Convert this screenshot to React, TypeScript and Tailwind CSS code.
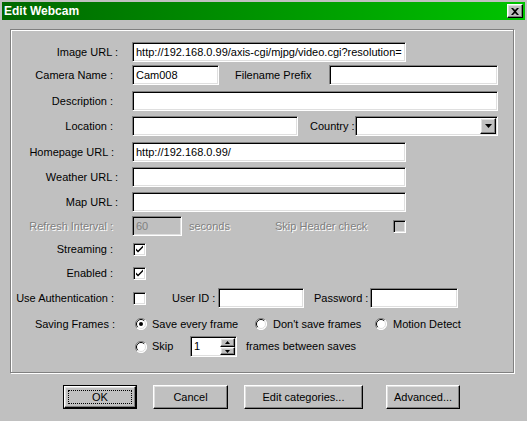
import React from "react";

const sunken =
  "border border-t-[#808080] border-l-[#808080] border-r-white border-b-white shadow-[inset_1px_1px_0_#000,inset_-1px_-1px_0_#dfdfdf]";
const raised =
  "bg-[#c0c0c0] border border-t-white border-l-white border-r-black border-b-black shadow-[inset_-1px_-1px_0_#808080,inset_1px_1px_0_#dfdfdf]";
const disabledText = "text-[#808080] [text-shadow:1px_1px_0_#ffffff]";

function Field({ w, value, disabled }: { w: string; value?: string; disabled?: boolean }) {
  return (
    <div
      className={`${sunken} ${w} h-[20px] shrink-0 flex items-center pl-[3px] overflow-hidden whitespace-nowrap ${
        disabled ? "bg-[#c0c0c0] text-[#808080]" : "bg-white text-black"
      }`}
    >
      {value}
    </div>
  );
}

function Check({ checked, disabled }: { checked?: boolean; disabled?: boolean }) {
  return (
    <div
      className={`${sunken} w-[13px] h-[13px] shrink-0 ${disabled ? "bg-[#c0c0c0]" : "bg-white"} flex items-center justify-center`}
    >
      {checked && (
        <svg width="9" height="9" viewBox="0 0 9 9">
          <path d="M1 3.5 L1 5.5 L3 7.5 L8 2.5 L8 0.5 L3 5.5 Z" fill="#000" />
        </svg>
      )}
    </div>
  );
}

function Radio({ checked }: { checked?: boolean }) {
  return (
    <svg width="12" height="12" viewBox="0 0 12 12" className="shrink-0">
      <circle cx="6" cy="6" r="5.5" fill="#ffffff" />
      <path d="M10 2 A5.5 5.5 0 0 0 2 10" stroke="#808080" strokeWidth="1" fill="none" />
      <path d="M9.2 2.8 A4.5 4.5 0 0 0 2.8 9.2" stroke="#000" strokeWidth="1" fill="none" />
      <path d="M2 10 A5.5 5.5 0 0 0 10 2" stroke="#ffffff" strokeWidth="1" fill="none" />
      <path d="M2.8 9.2 A4.5 4.5 0 0 0 9.2 2.8" stroke="#dfdfdf" strokeWidth="1" fill="none" />
      {checked && <circle cx="6" cy="6" r="2" fill="#000" />}
    </svg>
  );
}

function Label({ children, pr, disabled }: { children: React.ReactNode; pr: string; disabled?: boolean }) {
  return (
    <div className={`w-[121px] shrink-0 text-right whitespace-nowrap ${pr} ${disabled ? disabledText : ""}`}>
      {children}
    </div>
  );
}

function Button({ children, w, def }: { children: React.ReactNode; w: string; def?: boolean }) {
  if (def) {
    return (
      <div className={`${w} h-[24px] border border-black shrink-0`}>
        <div className={`${raised} w-full h-full flex items-center justify-center p-[3px]`}>
          <div className="w-full h-full border border-dotted border-black flex items-center justify-center">
            {children}
          </div>
        </div>
      </div>
    );
  }
  return (
    <div className={`${raised} ${w} h-[24px] shrink-0 flex items-center justify-center`}>{children}</div>
  );
}

export default function App() {
  return (
    <div className="w-[527px] h-[421px] bg-[#c0c0c0] p-[2px] font-['Liberation_Sans',Arial,sans-serif] text-[11px] text-black overflow-hidden leading-none">
      {/* Title bar */}
      <div className="h-[18px] flex items-center justify-between bg-gradient-to-r from-[#006800] to-[#00c400] pl-[2px] pr-[2px]">
        <span className="text-white font-bold text-[12px]">Edit Webcam</span>
        <div className={`${raised} w-[16px] h-[14px] flex items-center justify-center`}>
          <svg width="8" height="7" viewBox="0 0 8 7">
            <path d="M0 0 H2 L4 2 L6 0 H8 L5 3.5 L8 7 H6 L4 5 L2 7 H0 L3 3.5 Z" fill="#000" />
          </svg>
        </div>
      </div>

      {/* Group box */}
      <div className="ml-[8px] mt-[9px] w-[504px] h-[344px] border border-[#808080] shadow-[1px_1px_0_#fff,inset_1px_1px_0_#fff] pt-[12px] flex flex-col">
        <div className="flex items-center h-[20px]">
          <Label pr="pr-[14px]">Image URL :</Label>
          <Field w="w-[274px]" value="http://192.168.0.99/axis-cgi/mjpg/video.cgi?resolution=" />
        </div>
        <div className="flex items-center h-[20px] mt-[3px]">
          <Label pr="pr-[19px]">Camera Name :</Label>
          <Field w="w-[87px]" value="Cam008" />
          <div className="ml-[16px] w-[94px]">Filename Prefix</div>
          <Field w="w-[169px]" />
        </div>
        <div className="flex items-center h-[20px] mt-[6px]">
          <Label pr="pr-[19px]">Description :</Label>
          <Field w="w-[366px]" />
        </div>
        <div className="flex items-center h-[20px] mt-[5px]">
          <Label pr="pr-[19px]">Location :</Label>
          <Field w="w-[166px]" />
          <div className="ml-[12px] w-[45px]">Country :</div>
          <div className={`${sunken} bg-white w-[143px] h-[20px] shrink-0 flex items-center justify-end pr-[1px]`}>
            <div className={`${raised} w-[16px] h-[16px] flex items-center justify-center`}>
              <svg width="7" height="4" viewBox="0 0 7 4">
                <path d="M0 0 H7 L3.5 4 Z" fill="#000" />
              </svg>
            </div>
          </div>
        </div>
        <div className="flex items-center h-[20px] mt-[6px]">
          <Label pr="pr-[18px]">Homepage URL :</Label>
          <Field w="w-[274px]" value="http://192.168.0.99/" />
        </div>
        <div className="flex items-center h-[20px] mt-[5px]">
          <Label pr="pr-[14px]">Weather URL :</Label>
          <Field w="w-[274px]" />
        </div>
        <div className="flex items-center h-[20px] mt-[5px]">
          <Label pr="pr-[14px]">Map URL :</Label>
          <Field w="w-[274px]" />
        </div>
        <div className="flex items-center h-[20px] mt-[4px]">
          <Label pr="pr-[19px]" disabled>
            Refresh Interval :
          </Label>
          <Field w="w-[50px]" value="60" disabled />
          <div className={`ml-[7px] w-[86px] ${disabledText}`}>seconds</div>
          <div className={`w-[118px] ${disabledText}`}>Skip Header check</div>
          <Check disabled />
        </div>
        <div className="flex items-center h-[20px] mt-[3px]">
          <Label pr="pr-[19px]">Streaming :</Label>
          <div className="ml-[1px]">
            <Check checked />
          </div>
        </div>
        <div className="flex items-center h-[20px] mt-[4px]">
          <Label pr="pr-[19px]">Enabled :</Label>
          <div className="ml-[1px]">
            <Check checked />
          </div>
        </div>
        <div className="flex items-center h-[20px] mt-[5px]">
          <Label pr="pr-[18px]">Use Authentication :</Label>
          <div className="ml-[1px]">
            <Check />
          </div>
          <div className="ml-[26px] w-[46px]">User ID :</div>
          <Field w="w-[86px]" />
          <div className="ml-[10px] w-[56px]">Password :</div>
          <Field w="w-[88px]" />
        </div>
        <div className="flex items-center h-[20px] mt-[6px]">
          <Label pr="pr-[17px]">Saving Frames :</Label>
          <div className="ml-[3px] w-[120px] flex items-center gap-[5px]">
            <Radio checked />
            <span>Save every frame</span>
          </div>
          <div className="w-[120px] flex items-center gap-[6px]">
            <Radio />
            <span>Don't save frames</span>
          </div>
          <div className="flex items-center gap-[6px]">
            <Radio />
            <span>Motion Detect</span>
          </div>
        </div>
        <div className="flex items-center h-[21px] mt-[2px]">
          <div className="w-[121px] shrink-0" />
          <div className="ml-[3px] w-[55px] flex items-center gap-[5px]">
            <Radio />
            <span>Skip</span>
          </div>
          <div className={`${sunken} bg-white w-[47px] h-[21px] shrink-0 flex items-center justify-between pl-[3px] pr-[1px]`}>
            <span>1</span>
            <div className="flex flex-col w-[15px] h-[17px]">
              <div className={`${raised} h-[9px] flex items-center justify-center`}>
                <svg width="5" height="3" viewBox="0 0 5 3">
                  <path d="M0 3 H5 L2.5 0 Z" fill="#000" />
                </svg>
              </div>
              <div className={`${raised} h-[8px] flex items-center justify-center`}>
                <svg width="5" height="3" viewBox="0 0 5 3">
                  <path d="M0 0 H5 L2.5 3 Z" fill="#000" />
                </svg>
              </div>
            </div>
          </div>
          <div className="ml-[9px]">frames between saves</div>
        </div>
      </div>

      {/* Buttons */}
      <div className="flex items-center mt-[12px] ml-[61px]">
        <Button w="w-[74px]" def>
          OK
        </Button>
        <div className="ml-[16px]">
          <Button w="w-[75px]">Cancel</Button>
        </div>
        <div className="ml-[16px]">
          <Button w="w-[119px]">Edit categories...</Button>
        </div>
        <div className="ml-[23px]">
          <Button w="w-[74px]">Advanced...</Button>
        </div>
      </div>
    </div>
  );
}
